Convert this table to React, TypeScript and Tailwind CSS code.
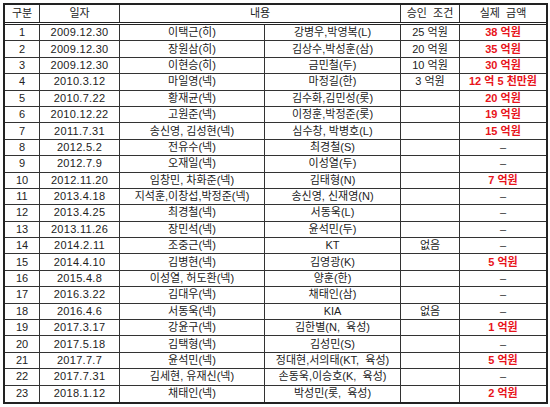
type Row = {
  no: number;
  date: string;
  from: string;
  to: string;
  cond?: string;
  amount?: string;
};

const rows: Row[] = [
  { no: 1, date: "2009.12.30", from: "이택근(히)", to: "강병우,박영복(L)", cond: "25 억원", amount: "38 억원" },
  { no: 2, date: "2009.12.30", from: "장원삼(히)", to: "김상수,박성훈(삼)", cond: "20 억원", amount: "35 억원" },
  { no: 3, date: "2009.12.30", from: "이현승(히)", to: "금민철(두)", cond: "10 억원", amount: "30 억원" },
  { no: 4, date: "2010.3.12", from: "마일영(넥)", to: "마정길(한)", cond: "3 억원", amount: "12 억 5 천만원" },
  { no: 5, date: "2010.7.22", from: "황재균(넥)", to: "김수화,김민성(롯)", amount: "20 억원" },
  { no: 6, date: "2010.12.22", from: "고원준(넥)", to: "이정훈,박정준(롯)", amount: "19 억원" },
  { no: 7, date: "2011.7.31", from: "송신영, 김성현(넥)", to: "심수창, 박병호(L)", amount: "15 억원" },
  { no: 8, date: "2012.5.2", from: "전유수(넥)", to: "최경철(S)" },
  { no: 9, date: "2012.7.9", from: "오재일(넥)", to: "이성열(두)" },
  { no: 10, date: "2012.11.20", from: "임창민, 차화준(넥)", to: "김태형(N)", amount: "7 억원" },
  { no: 11, date: "2013.4.18", from: "지석훈,이창섭,박정준(넥)", to: "송신영, 신재영(N)" },
  { no: 12, date: "2013.4.25", from: "최경철(넥)", to: "서동욱(L)" },
  { no: 13, date: "2013.11.26", from: "장민석(넥)", to: "윤석민(두)" },
  { no: 14, date: "2014.2.11", from: "조중근(넥)", to: "KT", cond: "없음" },
  { no: 15, date: "2014.4.10", from: "김병현(넥)", to: "김영광(K)", amount: "5 억원" },
  { no: 16, date: "2015.4.8", from: "이성열, 허도환(넥)", to: "양훈(한)" },
  { no: 17, date: "2016.3.22", from: "김대우(넥)", to: "채태인(삼)" },
  { no: 18, date: "2016.4.6", from: "서동욱(넥)", to: "KIA", cond: "없음" },
  { no: 19, date: "2017.3.17", from: "강윤구(넥)", to: "김한별(N,  육성)", amount: "1 억원" },
  { no: 20, date: "2017.5.18", from: "김택형(넥)", to: "김성민(S)" },
  { no: 21, date: "2017.7.7", from: "윤석민(넥)", to: "정대현,서의태(KT,  육성)", amount: "5 억원" },
  { no: 22, date: "2017.7.31", from: "김세현, 유재신(넥)", to: "손동욱,이승호(K,  육성)" },
  { no: 23, date: "2018.1.12", from: "채태인(넥)", to: "박성민(롯,  육성)", amount: "2 억원" },
];

const cols = "grid grid-cols-[35px_80px_145px_136px_59px_86px]";
const cell = "flex items-center justify-center whitespace-pre border-r border-[#333]";

export default function App() {
  return (
    <div className="h-[407px] w-[550px] bg-white pl-[3px] pt-[3px] text-[11px] leading-none text-[#222] [font-family:'Liberation_Sans','Noto_Sans_CJK_KR',sans-serif]">
      <div className="w-[545px] border-2 border-[#222]">
        <div className={`${cols} h-[17px] border-b-[3px] border-double border-[#222] box-content`}>
          <div className={cell}>구분</div>
          <div className={cell}>일자</div>
          <div className={`${cell} col-span-2`}>내용</div>
          <div className={cell}>승인&nbsp;&nbsp;조건</div>
          <div className={`${cell} border-r-0`}>실제&nbsp;&nbsp;금액</div>
        </div>
        {rows.map((r, i) => (
          <div
            key={r.no}
            className={`${cols} h-[16.4px] ${i === rows.length - 1 ? "" : "border-b border-[#333]"}`}
          >
            <div className={cell}>{r.no}</div>
            <div className={`${cell} tracking-[0.3px]`}>{r.date}</div>
            <div className={cell}>{r.from}</div>
            <div className={`${cell} overflow-visible`}>{r.to}</div>
            <div className={cell}>{r.cond ?? ""}</div>
            {r.amount ? (
              <div className={`${cell} border-r-0 font-bold text-[#e8141b]`}>{r.amount}</div>
            ) : (
              <div className={`${cell} border-r-0 text-[#333]`}>–</div>
            )}
          </div>
        ))}
      </div>
    </div>
  );
}
